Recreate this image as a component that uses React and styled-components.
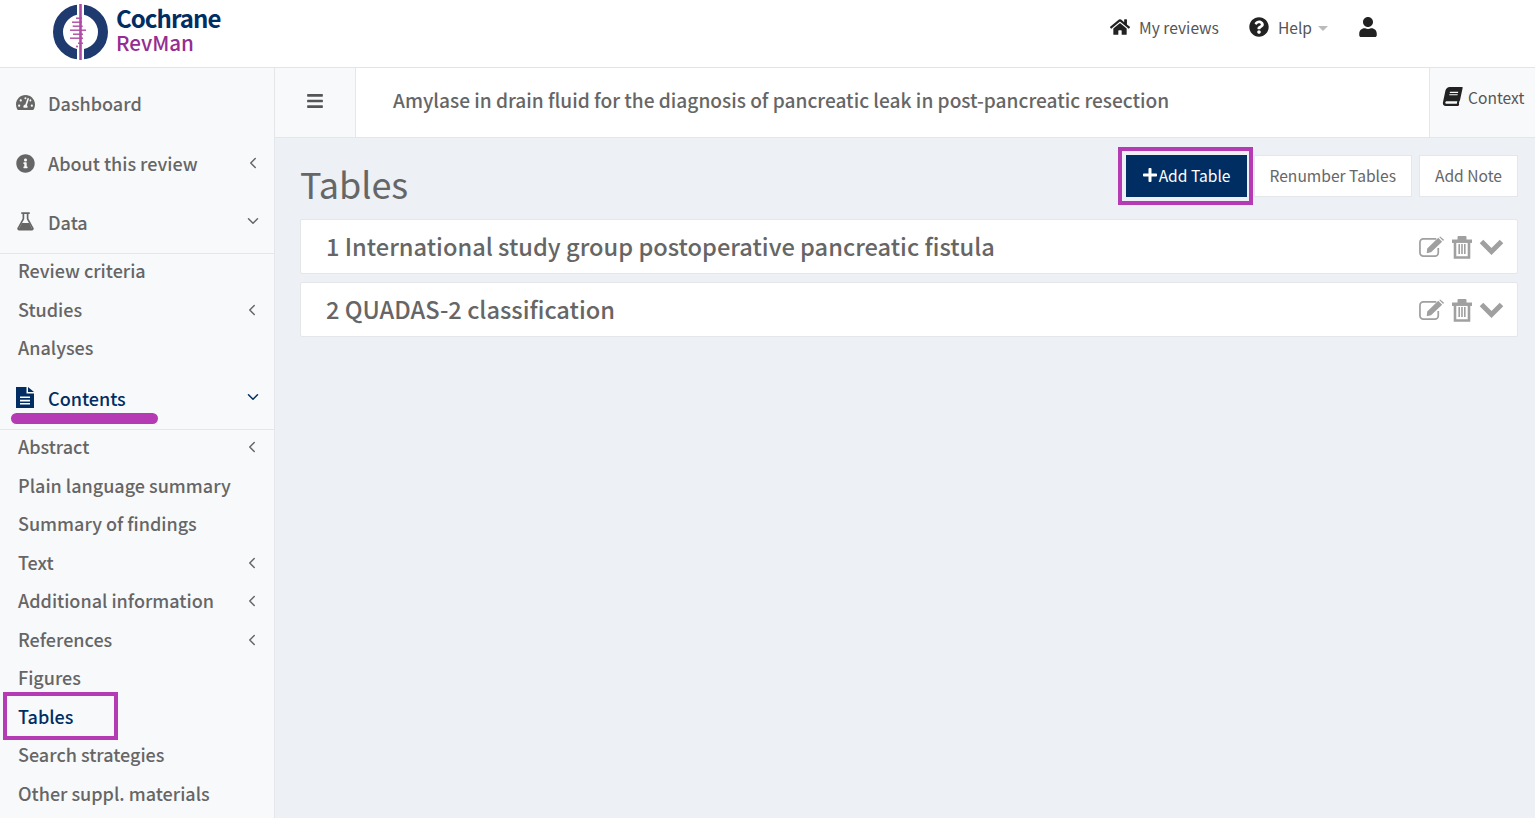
import styled, { createGlobalStyle } from "styled-components";
import { FaHome, FaQuestionCircle, FaUser, FaBook, FaPlus, FaTachometerAlt, FaInfoCircle, FaBars } from "react-icons/fa";
import { ChevronLeft, ChevronDown } from "lucide-react";

const GlobalStyle = createGlobalStyle`
  html, body { margin: 0; padding: 0; height: 100%; overflow: hidden; }
  body {
    font-family: "Noto Sans CJK SC", "Open Sans", sans-serif;
    font-size: 16px;
    color: #666;
    background: #edf0f5;
  }
`;

const Page = styled.div`
  width: 1535px;
  height: 818px;
  display: flex;
  flex-direction: column;
  overflow: hidden;
`;

const Header = styled.header`
  height: 67px;
  flex: none;
  background: #fff;
  border-bottom: 1px solid #e4e4e4;
  display: flex;
  align-items: center;
  justify-content: space-between;
  padding: 0 157px 0 52px;
`;

const Brand = styled.div`
  display: flex;
  align-items: center;
  gap: 8px;
  margin-top: -4px;
`;

const BrandText = styled.div`
  display: flex;
  flex-direction: column;
  margin-top: -5px;
`;

const BrandName = styled.span`
  font-size: 24px;
  line-height: 26px;
  font-weight: 700;
  letter-spacing: -0.95px;
  color: #002d62;
`;

const BrandSub = styled.span`
  font-size: 20.6px;
  line-height: 23px;
  font-weight: 500;
  color: #962d91;
`;

const TopNav = styled.nav`
  display: flex;
  align-items: center;
  gap: 30px;
  margin-top: -13px;
`;

const TopLink = styled.a`
  display: flex;
  align-items: center;
  gap: 9px;
  font-size: 15.6px;
  line-height: 22px;
  color: #555;
  svg { color: #222; font-size: 20px; }
`;

const Caret = styled.span`
  width: 0;
  height: 0;
  margin-left: -3px;
  margin-top: 3px;
  border: 5px solid transparent;
  border-top-color: #bbb;
  border-bottom: 0;
`;

const Body = styled.div`
  flex: 1;
  display: flex;
  min-height: 0;
`;

const Sidebar = styled.aside`
  width: 274px;
  flex: none;
  background: #f8f9fb;
  border-right: 1px solid #e4e6ea;
  padding-top: 8px;
`;

const SectionRow = styled.div`
  height: 59.4px;
  box-sizing: border-box;
  display: flex;
  align-items: center;
  padding: 0 12px ${(p) => p.$lift || 4}px 15px;
  font-size: 18px;
  font-weight: 500;
  color: ${(p) => (p.$active ? "#002d62" : "#666")};
  border-bottom: ${(p) => (p.$open ? "1px solid #e4e6ea" : "none")};
  position: relative;
`;

const LeadIcon = styled.span`
  width: 20px;
  margin-right: 13px;
  flex: none;
  display: flex;
  justify-content: center;
  font-size: 19px;
`;

const RowLabel = styled.span`
  flex: 1;
`;

const SubList = styled.div`
  display: flex;
  flex-direction: column;
  margin: -1px 0 ${(p) => (p.$first ? 2 : 0)}px;
`;

const SubItem = styled.div`
  height: 38.5px;
  box-sizing: border-box;
  padding: 0 13px 4px 18px;
  display: flex;
  align-items: center;
  font-size: 18px;
  font-weight: 500;
  color: ${(p) => (p.$active ? "#002d62" : "#666")};
  position: relative;
`;

const Chevron = styled.span`
  display: flex;
  margin-top: ${(p) => (p.$sub ? 2 : -1)}px;
  color: inherit;
`;

const Underline = styled.span`
  position: absolute;
  left: 11px;
  top: 42px;
  width: 147px;
  height: 11px;
  border-radius: 6px;
  background: #b53bb5;
`;

const TablesMark = styled.span`
  position: absolute;
  left: 3px;
  top: -7px;
  width: 115px;
  height: 48px;
  box-sizing: border-box;
  border: 4px solid #b53bb5;
`;

const Main = styled.main`
  flex: 1;
  min-width: 0;
  display: flex;
  flex-direction: column;
`;

const TitleBar = styled.div`
  height: 70px;
  flex: none;
  box-sizing: border-box;
  background: #fff;
  border-bottom: 1px solid #e4e6ea;
  display: flex;
  align-items: stretch;
`;

const MenuToggle = styled.div`
  width: 81px;
  flex: none;
  background: #f8f9fb;
  border-right: 1px solid #e4e6ea;
  display: flex;
  align-items: center;
  justify-content: center;
  color: #555;
  font-size: 18px;
  padding-bottom: 3px;
  box-sizing: border-box;
`;

const ReviewTitle = styled.div`
  flex: 1;
  padding: 0 0 5px 37px;
  display: flex;
  align-items: center;
  font-size: 19.13px;
  font-weight: 500;
  color: #666;
`;

const ContextTab = styled.div`
  width: 106px;
  flex: none;
  box-sizing: border-box;
  background: #f8f9fb;
  border-left: 1px solid #e4e6ea;
  display: flex;
  align-items: center;
  gap: 6px;
  padding: 0 0 12px 13px;
  font-size: 15.6px;
  color: #555;
`;

const SkewedBook = styled(FaBook)`
  color: #222;
  font-size: 19px;
  transform: skewX(-12deg);
`;

const Content = styled.div`
  flex: 1;
  padding: 17px 17px 0 25px;
`;

const ContentHead = styled.div`
  display: flex;
  justify-content: space-between;
  align-items: flex-start;
  height: 64px;
`;

const PageTitle = styled.h1`
  margin: 7px 0 0;
  font-size: 36px;
  line-height: 42px;
  font-weight: 400;
  color: #666;
`;

const Actions = styled.div`
  display: flex;
  gap: 7px;
`;

const Button = styled.button`
  height: 42px;
  box-sizing: border-box;
  padding: 0 15px 2px;
  display: flex;
  align-items: center;
  gap: 1px;
  font-family: inherit;
  font-size: 15.6px;
  background: ${(p) => (p.$primary ? "#002d62" : "#fff")};
  color: ${(p) => (p.$primary ? "#fff" : "#666")};
  border: 1px solid ${(p) => (p.$primary ? "#002d62" : "#e4e6ea")};
  position: relative;
  svg { font-size: 16px; }
`;

const ButtonMark = styled.span`
  position: absolute;
  inset: -9px -7px -9px -9px;
  border: 4px solid #b53bb5;
`;

const TableCard = styled.div`
  height: 55px;
  box-sizing: border-box;
  margin-bottom: 8px;
  background: #fff;
  border: 1px solid #e4e6ea;
  border-radius: 2px;
  display: flex;
  align-items: center;
  padding: 0 13px 0 25px;
`;

const CardTitle = styled.div`
  flex: 1;
  font-size: 23.63px;
  font-weight: 500;
  color: #666;
  padding-bottom: 2px;
`;

const CardIcons = styled.div`
  display: flex;
  align-items: center;
  gap: 7px;
  color: #a0a0a0;
`;

const Logo = () => (
  <svg width="56" height="56" viewBox="0 0 56 56">
    <circle cx="28.5" cy="28" r="22.5" fill="none" stroke="#1f3a6e" strokeWidth="10" />
    <rect x="25" y="0" width="7" height="56" fill="#fff" />
    <rect x="27.2" y="0" width="2.6" height="56" fill="#b04ba5" />
    <g fill="#b04ba5">
      <rect x="24" y="13.5" width="6" height="1.4" />
      <rect x="20" y="17.5" width="10" height="1.4" />
      <rect x="20.7" y="21.5" width="10" height="1.4" />
      <rect x="18" y="25.5" width="16" height="1.4" />
      <rect x="21" y="29.5" width="10" height="1.4" />
      <rect x="18" y="33.5" width="13" height="1.4" />
      <rect x="26" y="38.5" width="5" height="1.4" />
      <circle cx="25" cy="42.5" r="1" />
    </g>
  </svg>
);

const FlaskIcon = () => (
  <svg width="19" height="19" viewBox="0 0 18 18">
    <path d="M5 1h8M7 1.5v5L2.2 15.2a1 1 0 0 0 .9 1.6h11.8a1 1 0 0 0 .9-1.6L11 6.5v-5" fill="none" stroke="currentColor" strokeWidth="1.6" />
    <path d="M5.5 10.5h7l3.2 6.3H2.3z" fill="currentColor" />
  </svg>
);

const FileIcon = () => (
  <svg width="18" height="21" viewBox="0 0 18 21" fill="currentColor">
    <path d="M0 0h10.5v6.5H18V21H0z" />
    <path d="M12 0l6 5h-6z" />
    <path d="M4 9.5h10v1.6H4zM4 12.8h10v1.6H4zM4 16h10v1.6H4z" fill="#fff" />
  </svg>
);

const EditIcon = () => (
  <svg width="26" height="22" viewBox="0 0 27 22">
    <path d="M20 12v5a3.5 3.5 0 0 1-3.5 3.5h-12A3.5 3.5 0 0 1 1 17V6a3.5 3.5 0 0 1 3.5-3.5H18" fill="none" stroke="currentColor" strokeWidth="1.8" />
    <path d="M8.5 12.5L20 1.5l4 4L12.5 16.5l-4.5 1zM21 .6l1-.6 4 3.6-1 1.2z" fill="currentColor" />
  </svg>
);

const TrashIcon = () => (
  <svg width="20" height="24" viewBox="0 0 20 24">
    <path d="M0 5h20v2.4H0zM6 5V1.5h8V5" fill="currentColor" stroke="currentColor" strokeWidth="1" />
    <path d="M3 6v16.5h14V6" fill="none" stroke="currentColor" strokeWidth="2.6" />
    <path d="M7.2 9v10M10 9v10M12.8 9v10" stroke="currentColor" strokeWidth="1.6" />
  </svg>
);

const DownIcon = () => (
  <svg width="25" height="17" viewBox="0 0 25 17">
    <path d="M2.5 3.5l10 10 10-10" fill="none" stroke="currentColor" strokeWidth="5" />
  </svg>
);

const subA = ["Review criteria", "Studies", "Analyses"];

const subB = [
  { name: "Abstract", more: true },
  { name: "Plain language summary" },
  { name: "Summary of findings" },
  { name: "Text", more: true },
  { name: "Additional information", more: true },
  { name: "References", more: true },
  { name: "Figures" },
  { name: "Tables", active: true },
  { name: "Search strategies" },
  { name: "Other suppl. materials" },
];

const tables = ["1 International study group postoperative pancreatic fistula", "2 QUADAS-2 classification"];

export default function App() {
  return (
    <Page>
      <GlobalStyle />
      <Header>
        <Brand>
          <Logo />
          <BrandText>
            <BrandName>Cochrane</BrandName>
            <BrandSub>RevMan</BrandSub>
          </BrandText>
        </Brand>
        <TopNav>
          <TopLink><FaHome />My reviews</TopLink>
          <TopLink><FaQuestionCircle />Help<Caret /></TopLink>
          <TopLink><FaUser /></TopLink>
        </TopNav>
      </Header>
      <Body>
        <Sidebar>
          <SectionRow $lift={6}><LeadIcon><FaTachometerAlt /></LeadIcon><RowLabel>Dashboard</RowLabel></SectionRow>
          <SectionRow><LeadIcon><FaInfoCircle /></LeadIcon><RowLabel>About this review</RowLabel><Chevron><ChevronLeft size={18} /></Chevron></SectionRow>
          <SectionRow $open><LeadIcon><FlaskIcon /></LeadIcon><RowLabel>Data</RowLabel><Chevron><ChevronDown size={18} /></Chevron></SectionRow>
          <SubList $first>
            {subA.map((name) => (
              <SubItem key={name}>
                <RowLabel>{name}</RowLabel>
                {name === "Studies" && <Chevron $sub><ChevronLeft size={18} /></Chevron>}
              </SubItem>
            ))}
          </SubList>
          <SectionRow $open $active>
            <LeadIcon><FileIcon /></LeadIcon><RowLabel>Contents</RowLabel><Chevron><ChevronDown size={18} /></Chevron>
            <Underline />
          </SectionRow>
          <SubList>
            {subB.map((item) => (
              <SubItem key={item.name} $active={item.active}>
                <RowLabel>{item.name}</RowLabel>
                {item.more && <Chevron $sub><ChevronLeft size={18} /></Chevron>}
                {item.active && <TablesMark />}
              </SubItem>
            ))}
          </SubList>
        </Sidebar>
        <Main>
          <TitleBar>
            <MenuToggle><FaBars /></MenuToggle>
            <ReviewTitle>Amylase in drain fluid for the diagnosis of pancreatic leak in post-pancreatic resection</ReviewTitle>
            <ContextTab><SkewedBook />Context</ContextTab>
          </TitleBar>
          <Content>
            <ContentHead>
              <PageTitle>Tables</PageTitle>
              <Actions>
                <Button $primary><FaPlus />Add Table<ButtonMark /></Button>
                <Button>Renumber Tables</Button>
                <Button>Add Note</Button>
              </Actions>
            </ContentHead>
            {tables.map((t) => (
              <TableCard key={t}>
                <CardTitle>{t}</CardTitle>
                <CardIcons>
                  <EditIcon />
                  <TrashIcon />
                  <DownIcon />
                </CardIcons>
              </TableCard>
            ))}
          </Content>
        </Main>
      </Body>
    </Page>
  );
}
